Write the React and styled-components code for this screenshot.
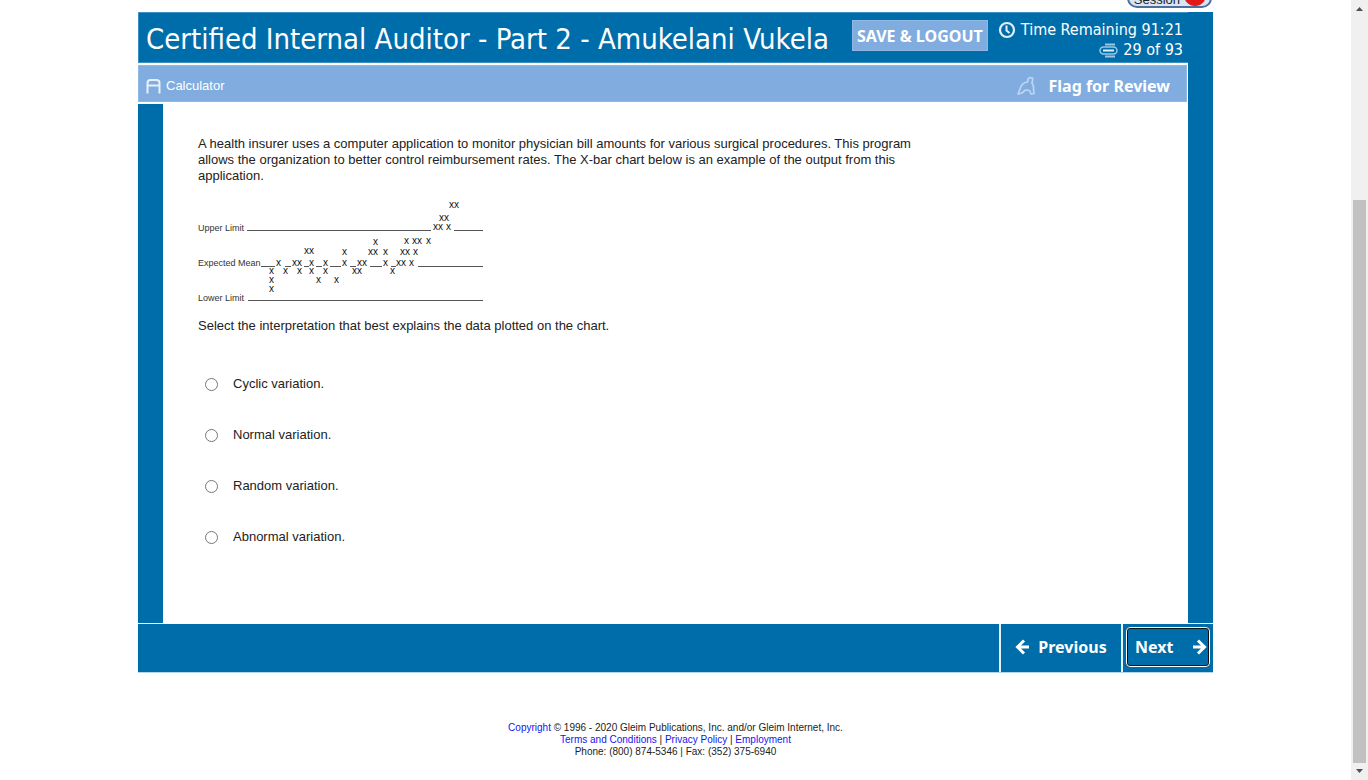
import React from "react";
import styled, { createGlobalStyle } from "styled-components";

const blue = "#006dab";
const lightBlue = "#80acdf";
const uiFont = 'Tahoma, "DejaVu Sans Condensed", "DejaVu Sans", sans-serif';
const boldFont = '"Noto Sans", Tahoma, sans-serif';
const textFont = '"Liberation Sans", Arial, sans-serif';

const GlobalStyle = createGlobalStyle`
  *, *::before, *::after { box-sizing: border-box; }
  body { margin: 0; background: #fff; color: #222; font: 13px/16px ${textFont}; }
  h1, p, fieldset { margin: 0; padding: 0; border: 0; }
  button { font: inherit; color: inherit; cursor: pointer; }
`;

const Page = styled.div`
  display: grid;
  grid-template-columns: minmax(0, 1fr) 17px;
  min-height: 100vh;
`;

const Main = styled.main`
  width: 100%;
  max-width: 1075px;
  margin: 0 auto;
`;

const SessionStrip = styled.div`
  display: flex;
  justify-content: flex-end;
  align-items: flex-end;
  height: 12px;
  padding: 0 1px 4px 0;
  overflow: hidden;
`;

const SessionButton = styled.button`
  display: flex;
  flex: none;
  align-items: flex-end;
  justify-content: flex-end;
  gap: 4px;
  width: 85px;
  height: 36px;
  padding: 0 4px;
  border: 2px solid #4f6e9e;
  border-radius: 10px;
  background: #d7e6f7;
  color: #222;
  font-size: 13px;
  line-height: 12px;
`;

const StopDot = styled.span`
  width: 22px;
  height: 22px;
  border-radius: 50%;
  background: #e01a1a;
`;

const Exam = styled.div`
  display: grid;
  grid-template-columns: minmax(0, 1fr) 25px;
`;

const RightRail = styled.div`
  background: ${blue};
`;

const Header = styled.header`
  display: flex;
  align-items: center;
  height: 51px;
  padding: 2px 5px 0 7px;
  background: ${blue};
  border: solid #3c90c2;
  border-width: 1px 0 1px 1px;
  color: #fff;
  font-family: ${uiFont};
`;

const Title = styled.h1`
  flex: 1;
  font-size: 29px;
  line-height: 36px;
  font-weight: 400;
  white-space: nowrap;
`;

const SaveButton = styled.button`
  width: 136px;
  height: 31px;
  margin: 5px 10px 0 0;
  padding: 0;
  align-self: flex-start;
  border: 1px solid #8fb9e4;
  background: ${lightBlue};
  font: 700 16px/24px ${boldFont};
  white-space: nowrap;
`;

const Status = styled.div`
  display: flex;
  flex-direction: column;
  align-items: flex-end;
  padding-top: 3px;
  font-size: 16px;
  line-height: 20px;
  white-space: nowrap;
`;

const StatusLine = styled.div`
  display: flex;
  align-items: center;
  gap: 5px;
`;

const Toolbar = styled.div`
  display: flex;
  align-items: center;
  justify-content: space-between;
  height: 37px;
  margin: 2px 1px 2px 0;
  padding: 4px 16px 0 7px;
  border: 1px solid #91b9e6;
  background: ${lightBlue};
  color: #fff;
`;

const ToolButton = styled.button`
  display: flex;
  align-items: center;
  gap: ${(p) => (p.$large ? 14 : 5)}px;
  padding: 0;
  border: 0;
  background: none;
  ${(p) => p.$large && `font: 700 16px/24px ${boldFont};`}
`;

const Body = styled.section`
  min-height: 519px;
  padding: 32px 24px 24px 35px;
  border-left: 25px solid ${blue};
`;

const Passage = styled.p`
  max-width: 740px;
`;

const Chart = styled.svg`
  display: block;
  margin: 14px 0 12px;
`;

const Options = styled.fieldset`
  display: grid;
  gap: 35px;
  margin-top: 42px;
  padding-left: 7px;
`;

const Option = styled.label`
  display: flex;
  align-items: center;
  gap: 15px;
`;

const Radio = styled.input`
  width: 13px;
  height: 13px;
  margin: 0;
`;

const Navigation = styled.nav`
  display: flex;
  justify-content: flex-end;
  height: 49px;
  margin-top: 1px;
  border-bottom: 1px solid #b5d6ea;
  background: ${blue};
  color: #fff;
`;

const NavCell = styled.div`
  width: ${(p) => p.$width}px;
  padding: 3px;
  border-left: 2px solid #e3f1f9;
`;

const NavButton = styled.button`
  display: flex;
  align-items: center;
  justify-content: ${(p) => (p.$active ? "space-between" : "center")};
  gap: 8px;
  width: 100%;
  height: 40px;
  padding: ${(p) => (p.$active ? "0 1px 0 7px" : "0")};
  border: ${(p) => (p.$active ? "2px solid #101010" : "0")};
  outline: ${(p) => (p.$active ? "1px solid #fff" : "none")};
  outline-offset: -1px;
  border-radius: 4px;
  background: none;
  font: 700 16px/24px ${boldFont};
`;

const Legal = styled.footer`
  margin: 49px 0 22px;
  color: #222;
  font-size: 10px;
  line-height: 12px;
  text-align: center;
`;

const Link = styled.a`
  color: #1414f0;
  text-decoration: none;
`;

const ScrollRail = styled.aside`
  position: sticky;
  top: 0;
  display: flex;
  flex-direction: column;
  align-items: center;
  justify-content: space-between;
  height: 100vh;
  padding: 7px 0 6px;
  background: #f0f0f0;
`;

const ScrollTrack = styled.div`
  display: flex;
  flex: 1;
  flex-direction: column;
  justify-content: flex-end;
  padding-bottom: 6px;
`;

const ScrollThumb = styled.div`
  width: 13px;
  height: 75%;
  background: #c1c1c1;
`;

const marks = [
  ["xx", 251, 10], ["xx", 241, 23], ["xx", 235, 32], ["x", 248, 32],
  ["x", 175, 47], ["x", 206, 46], ["xx", 214, 46], ["x", 228, 46],
  ["xx", 106, 56], ["x", 144, 57], ["xx", 170, 57], ["x", 185, 57], ["xx", 202, 57], ["x", 215, 57],
  ["x", 78, 68], ["xx", 94, 68], ["x", 111, 68], ["x", 125, 68], ["x", 144, 68],
  ["xx", 159, 68], ["x", 185, 68], ["xx", 198, 68], ["x", 211, 68],
  ["x", 71, 76], ["x", 85, 76], ["x", 99, 76], ["x", 111, 76], ["x", 125, 76], ["xx", 154, 76], ["x", 192, 76],
  ["x", 71, 85], ["x", 118, 85], ["x", 136, 85], ["x", 71, 94],
];

const lines = [
  [49, 233, 32], [256, 285, 32],
  [63, 77, 68], [87, 93, 68], [106, 111, 68], [118, 124, 68], [132, 143, 68],
  [152, 158, 68], [172, 184, 68], [193, 198, 68], [220, 285, 68],
  [50, 285, 102],
];

const labels = [["Upper Limit", 33], ["Expected Mean", 68], ["Lower Limit", 103]];

function XBarChart() {
  return (
    <Chart width="292" height="108" viewBox="0 0 292 108" role="img" aria-label="X-bar chart">
      <g stroke="#555" strokeWidth="1">
        {lines.map(([a, b, y]) => (
          <line key={`${a}-${y}`} x1={a} x2={b} y1={y + 0.5} y2={y + 0.5} />
        ))}
      </g>
      <g fill="#333" fontFamily={textFont} fontSize="9">
        {labels.map(([t, y]) => <text key={t} x="0" y={y}>{t}</text>)}
      </g>
      <g fill="#111" fontFamily={textFont} fontSize="10">
        {marks.map(([t, x, y]) => <text key={`${x}-${y}`} x={x} y={y}>{t}</text>)}
      </g>
    </Chart>
  );
}

const ClockIcon = () => (
  <svg width="18" height="18" viewBox="0 0 18 18" fill="none" stroke="#e4f0f8" aria-hidden="true">
    <circle cx="9" cy="9" r="7" strokeWidth="2.2" />
    <path d="M8.500 4.500v5l3 2.500" strokeWidth="2" />
  </svg>
);

const PagesIcon = () => (
  <svg width="19" height="15" viewBox="0 0 19 15" fill="none" stroke="#9cc6e1" aria-hidden="true">
    <path d="M6 1.500h10M6 13.500h10" strokeWidth="2" />
    <rect x="1" y="4" width="17" height="7" rx="3.500" strokeWidth="1.500" />
    <path d="M4 7.500h11" stroke="#e4f0f8" strokeWidth="2" />
  </svg>
);

const CalculatorIcon = () => (
  <svg width="15" height="16" viewBox="0 0 15 16" fill="none" stroke="#e6f0fb" strokeWidth="2" aria-hidden="true">
    <path d="M1.500 15.500V5q0-3 3-3h6q3 0 3 3v10.500M1.500 7.500h12" />
  </svg>
);

const FlagIcon = () => (
  <svg width="18" height="20" viewBox="0 0 18 20" fill="none" stroke="#bcd6f2" strokeWidth="1.700" strokeLinejoin="round" aria-hidden="true">
    <path d="M1 18 4 10.500Q6 6.500 10.500 6L11 3 12.500 1.500l3 .500V5l-.500 2 1.500 3v3l.500 4.500-3 .500-1.500-3.500-4-.500-3.500 3L1 18Z" />
  </svg>
);

const ArrowIcon = ({ right }) => (
  <svg width="15" height="16" viewBox="0 0 15 16" fill="none" stroke="#fff" strokeWidth="3" aria-hidden="true">
    <path d={right ? "M1 8h11M6 1.500 12.500 8 6 14.500" : "M14 8H3M9 1.500 2.500 8 9 14.500"} />
  </svg>
);

const ScrollArrow = ({ down }) => (
  <svg width="9" height="5" viewBox="0 0 9 5" fill="#505050" aria-hidden="true">
    <path d={down ? "M1 0h7L4.500 4Z" : "M1 4h7L4.500 0Z"} />
  </svg>
);

const answers = ["Cyclic variation.", "Normal variation.", "Random variation.", "Abnormal variation."];

export default function App() {
  return (
    <Page>
      <GlobalStyle />
      <Main>
        <SessionStrip>
          <SessionButton type="button">Session<StopDot /></SessionButton>
        </SessionStrip>
        <Exam>
          <div>
            <Header>
              <Title>Certified Internal Auditor - Part 2 - Amukelani Vukela</Title>
              <SaveButton type="button">SAVE &amp; LOGOUT</SaveButton>
              <Status>
                <StatusLine><ClockIcon />Time Remaining 91:21</StatusLine>
                <StatusLine><PagesIcon />29 of 93</StatusLine>
              </Status>
            </Header>
            <Toolbar>
              <ToolButton type="button"><CalculatorIcon />Calculator</ToolButton>
              <ToolButton type="button" $large><FlagIcon />Flag for Review</ToolButton>
            </Toolbar>
            <Body>
              <Passage>
                A health insurer uses a computer application to monitor physician bill amounts for various
                surgical procedures. This program allows the organization to better control reimbursement
                rates. The X-bar chart below is an example of the output from this application.
              </Passage>
              <XBarChart />
              <Passage>Select the interpretation that best explains the data plotted on the chart.</Passage>
              <Options aria-label="Answers">
                {answers.map((answer) => (
                  <Option key={answer}>
                    <Radio type="radio" name="answer" />
                    {answer}
                  </Option>
                ))}
              </Options>
            </Body>
          </div>
          <RightRail />
        </Exam>
        <Navigation>
          <NavCell $width={122}>
            <NavButton type="button"><ArrowIcon />Previous</NavButton>
          </NavCell>
          <NavCell $width={92}>
            <NavButton type="button" $active>Next<ArrowIcon right /></NavButton>
          </NavCell>
        </Navigation>
        <Legal>
          <div><Link href="#copyright">Copyright</Link> © 1996 - 2020 Gleim Publications, Inc. and/or Gleim Internet, Inc.</div>
          <div>
            <Link href="#terms">Terms and Conditions</Link> | <Link href="#privacy">Privacy Policy</Link> | <Link href="#employment">Employment</Link>
          </div>
          <div>Phone: (800) 874-5346 | Fax: (352) 375-6940</div>
        </Legal>
      </Main>
      <ScrollRail aria-hidden="true">
        <ScrollArrow />
        <ScrollTrack><ScrollThumb /></ScrollTrack>
        <ScrollArrow down />
      </ScrollRail>
    </Page>
  );
}
